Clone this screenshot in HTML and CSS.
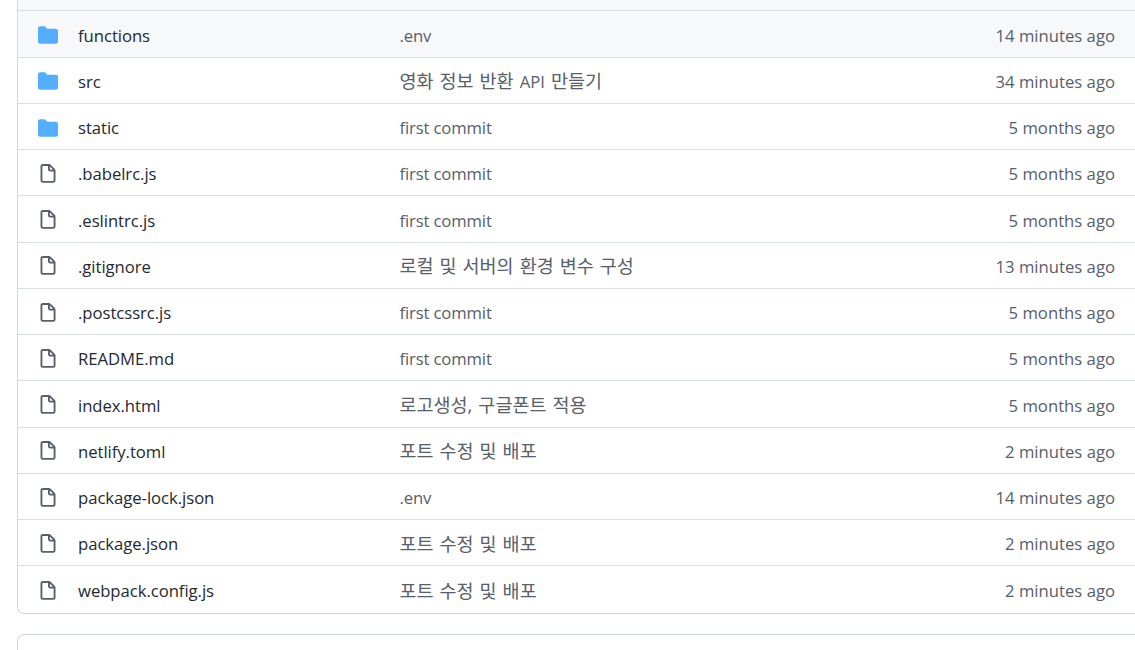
FILE: index.html
```html
<!DOCTYPE html>
<html lang="en">
<head>
  <meta charset="UTF-8" />
  <title>Repository files</title>
  <meta name="viewport" content="width=device-width, initial-scale=1.0" />
  <link rel="stylesheet" href="styles.css">
</head>
<body>
  <svg class="sprites" width="0" height="0">
    <symbol id="icon-folder" viewBox="0 0 16 16">
      <path d="M1.75 1A1.75 1.75 0 000 2.75v10.5C0 14.216.784 15 1.75 15h12.5A1.75 1.75 0 0016 13.25v-8.5A1.75 1.75 0 0014.25 3H7.5a.25.25 0 01-.2-.1l-.9-1.2C6.07 1.26 5.55 1 5 1H1.75z"/>
    </symbol>
    <symbol id="icon-file" viewBox="0 0 16 16">
      <path fill-rule="evenodd" d="M3.75 1.5a.25.25 0 00-.25.25v11.5c0 .138.112.25.25.25h8.5a.25.25 0 00.25-.25V6H9.75A1.75 1.75 0 018 4.25V1.5H3.75zm5.75.56v2.19c0 .138.112.25.25.25h2.19L9.5 2.06zM2 1.75C2 .784 2.784 0 3.75 0h5.086c.464 0 .909.184 1.237.513l3.414 3.414c.329.328.513.773.513 1.237v8.086A1.75 1.75 0 0112.25 15h-8.5A1.75 1.75 0 012 13.25V1.75z"/>
    </symbol>
  </svg>

  <div class="file-box">
    <div class="box-top"></div>

    <div class="row hovered">
      <svg class="icon folder"><use href="#icon-folder"/></svg>
      <a class="name">functions</a>
      <span class="message">.env</span>
      <span class="age">14 minutes ago</span>
    </div>
    <div class="row">
      <svg class="icon folder"><use href="#icon-folder"/></svg>
      <a class="name">src</a>
      <span class="message ko">영화 정보 반환 <span class="latin">API</span> 만들기</span>
      <span class="age">34 minutes ago</span>
    </div>
    <div class="row">
      <svg class="icon folder"><use href="#icon-folder"/></svg>
      <a class="name">static</a>
      <span class="message">first commit</span>
      <span class="age">5 months ago</span>
    </div>
    <div class="row">
      <svg class="icon file"><use href="#icon-file"/></svg>
      <a class="name">.babelrc.js</a>
      <span class="message">first commit</span>
      <span class="age">5 months ago</span>
    </div>
    <div class="row">
      <svg class="icon file"><use href="#icon-file"/></svg>
      <a class="name">.eslintrc.js</a>
      <span class="message">first commit</span>
      <span class="age">5 months ago</span>
    </div>
    <div class="row">
      <svg class="icon file"><use href="#icon-file"/></svg>
      <a class="name">.gitignore</a>
      <span class="message ko">로컬 및 서버의 환경 변수 구성</span>
      <span class="age">13 minutes ago</span>
    </div>
    <div class="row">
      <svg class="icon file"><use href="#icon-file"/></svg>
      <a class="name">.postcssrc.js</a>
      <span class="message">first commit</span>
      <span class="age">5 months ago</span>
    </div>
    <div class="row">
      <svg class="icon file"><use href="#icon-file"/></svg>
      <a class="name">README.md</a>
      <span class="message">first commit</span>
      <span class="age">5 months ago</span>
    </div>
    <div class="row">
      <svg class="icon file"><use href="#icon-file"/></svg>
      <a class="name">index.html</a>
      <span class="message ko">로고생성, 구글폰트 적용</span>
      <span class="age">5 months ago</span>
    </div>
    <div class="row">
      <svg class="icon file"><use href="#icon-file"/></svg>
      <a class="name">netlify.toml</a>
      <span class="message ko">포트 수정 및 배포</span>
      <span class="age">2 minutes ago</span>
    </div>
    <div class="row">
      <svg class="icon file"><use href="#icon-file"/></svg>
      <a class="name">package-lock.json</a>
      <span class="message">.env</span>
      <span class="age">14 minutes ago</span>
    </div>
    <div class="row">
      <svg class="icon file"><use href="#icon-file"/></svg>
      <a class="name">package.json</a>
      <span class="message ko">포트 수정 및 배포</span>
      <span class="age">2 minutes ago</span>
    </div>
    <div class="row last">
      <svg class="icon file"><use href="#icon-file"/></svg>
      <a class="name">webpack.config.js</a>
      <span class="message ko">포트 수정 및 배포</span>
      <span class="age">2 minutes ago</span>
    </div>
  </div>

  <div class="readme-box"></div>
</body>
</html>
```

FILE: styles.css
```css
* {
  box-sizing: border-box;
}

html, body {
  height: 650px;
  overflow: hidden;
}

body {
  margin: 0;
  padding: 0 0 0 17px;
  background: #fff;
  color: #24292f;
  font-family: "Open Sans", "Noto Sans CJK KR", sans-serif;
  font-size: 16.7px;
}

.sprites {
  display: block;
}

.file-box {
  margin-right: -8px;
  border: 1px solid #d0d7de;
  border-top: none;
  border-radius: 0 0 7px 7px;
}

.box-top {
  height: 10.4px;
  background: #f6f8fa;
}

.row {
  display: flex;
  align-items: center;
  height: 46.25px;
  padding: 2px 27px 0 20px;
  border-top: 1px solid #d8dee4;
}

.row.hovered {
  background: #f6f8fa;
}

.row.last {
  height: 47.75px;
  padding-top: 2px;
}

.icon {
  flex: none;
  width: 20px;
  height: 20px;
  margin-right: 20px;
}

.folder {
  fill: #54aeff;
}

.file {
  fill: #57606a;
}

.name {
  flex: none;
  width: 322px;
  letter-spacing: -0.05px;
  white-space: nowrap;
}

.message {
  flex: 1;
  margin-left: -0.5px;
  color: #57606a;
  letter-spacing: -0.15px;
  white-space: nowrap;
}

.message.ko {
  margin-bottom: 2px;
  font-size: 18.5px;
  letter-spacing: 0;
  word-spacing: 1.2px;
}

.latin {
  font-size: 16.7px;
}

.age {
  flex: none;
  color: #57606a;
  white-space: nowrap;
}

.readme-box {
  height: 16px;
  margin-top: 20px;
  margin-right: -8px;
  border: 1px solid #d0d7de;
  border-bottom: none;
  border-radius: 7px 7px 0 0;
}
```
